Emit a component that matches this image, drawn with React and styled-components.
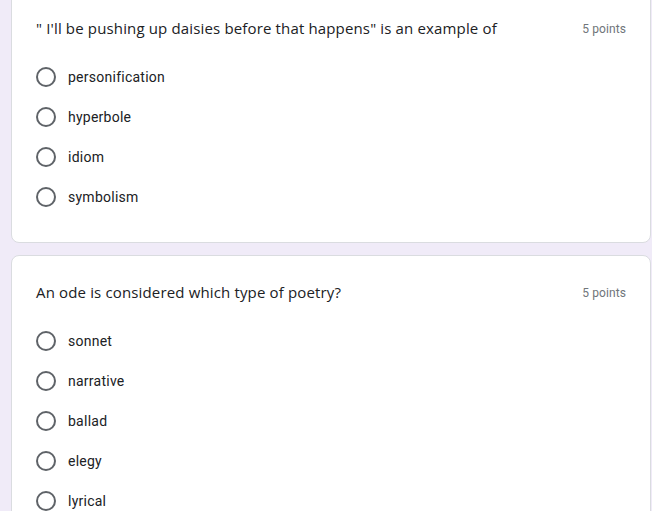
import React from "react";
import styled, { createGlobalStyle } from "styled-components";

const Global = createGlobalStyle`
  html, body {
    margin: 0;
    padding: 0;
    background: #f0ebf8;
    overflow: hidden;
  }
`;

const Page = styled.div`
  width: 652px;
  height: 511px;
  overflow: hidden;
  padding: 0 1px 0 11px;
  box-sizing: border-box;
`;

const Stack = styled.div`
  display: flex;
  flex-direction: column;
  gap: 12px;
  margin-top: -9px;
`;

const Card = styled.div`
  background: #ffffff;
  border: 1px solid #dadce0;
  border-radius: 8px;
  padding: 24px 24px 25px 24px;
`;

const Head = styled.div`
  display: flex;
  justify-content: space-between;
  align-items: center;
  height: 24px;
  margin-bottom: 17px;
`;

const Title = styled.div`
  font-family: "Open Sans", Roboto, sans-serif;
  font-size: 15px;
  color: #202124;
  letter-spacing: 0.15px;
`;

const Points = styled.div`
  font-family: Roboto, "Liberation Sans", sans-serif;
  font-size: 12px;
  color: #70757a;
  letter-spacing: 0.1px;
  margin-top: 2px;
`;

const Option = styled.label`
  display: flex;
  align-items: center;
  height: 40px;
  gap: 12px;
`;

const Radio = styled.span`
  width: 20px;
  height: 20px;
  box-sizing: border-box;
  border: 2px solid #5f6368;
  border-radius: 50%;
  flex: none;
`;

const Label = styled.span`
  font-family: Roboto, "Liberation Sans", sans-serif;
  font-size: 14px;
  color: #202124;
  letter-spacing: 0.25px;
`;

const questions = [
  {
    q: "\" I'll be pushing up daisies before that happens\" is an example of",
    options: ["personification", "hyperbole", "idiom", "symbolism"],
  },
  {
    q: "An ode is considered which type of poetry?",
    options: ["sonnet", "narrative", "ballad", "elegy", "lyrical"],
  },
];

export default function App() {
  return (
    <Page>
      <Global />
      <Stack>
        {questions.map((item) => (
          <Card key={item.q}>
            <Head>
              <Title>{item.q}</Title>
              <Points>5 points</Points>
            </Head>
            {item.options.map((o) => (
              <Option key={o}>
                <Radio />
                <Label>{o}</Label>
              </Option>
            ))}
          </Card>
        ))}
      </Stack>
    </Page>
  );
}
